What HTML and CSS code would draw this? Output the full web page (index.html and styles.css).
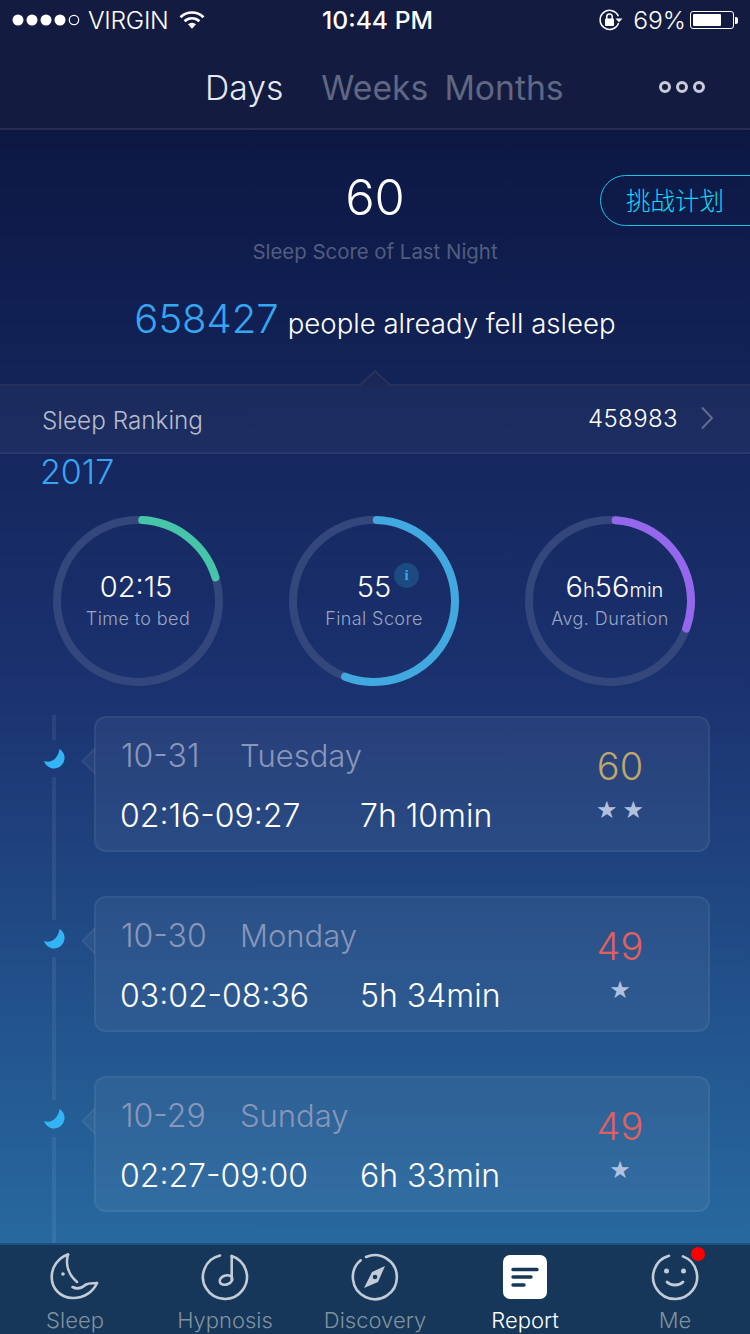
FILE: index.html
```html
<!DOCTYPE html>
<html lang="en">
<head>
<meta charset="utf-8">
<title>Sleep report</title>
<link rel="stylesheet" href="styles.css">
</head>
<body>
<div class="page">
  <header class="top">
    <div class="status">
      <div class="status-left">
        <svg class="signal" width="68" height="14" viewBox="0 0 68 14"><g fill="#fff"><circle cx="6" cy="7" r="5.5"/><circle cx="20" cy="7" r="5.5"/><circle cx="34" cy="7" r="5.5"/><circle cx="48" cy="7" r="5.5"/></g><circle cx="62" cy="7" r="4.7" fill="none" stroke="#fff" stroke-width="1.2"/></svg>
        <span class="carrier">VIRGIN</span>
        <svg class="wifi" width="26" height="20" viewBox="0 0 26 20"><g fill="none" stroke="#fff" stroke-width="2.6"><path d="M1.5 7.2a16.5 16.5 0 0 1 23 0"/><path d="M5.6 11.2a10.7 10.7 0 0 1 14.8 0"/></g><path d="M9 14.3a5.8 5.8 0 0 1 8 0l-4 4.4z" fill="#fff"/></svg>
      </div>
      <div class="clock">10:44 PM</div>
      <div class="status-right">
        <svg class="rotlock" width="24" height="22" viewBox="0 0 24 22"><path d="M19.4 7.2A9.5 9.5 0 1 0 19.6 14" fill="none" stroke="#fff" stroke-width="1.5"/><path d="M16.5 9.5h7L20 13.2z" fill="#fff"/><rect x="6" y="9.5" width="9" height="7.5" rx="1" fill="#fff"/><path d="M7.8 10V7.6a2.7 2.7 0 0 1 5.4 0V10" fill="none" stroke="#fff" stroke-width="1.5"/></svg>
        <span class="pct">69%</span>
        <span class="battery"><span class="battery-fill"></span></span><span class="battery-cap"></span>
      </div>
    </div>
    <nav class="tabs">
      <span class="tab tab-on">Days</span>
      <span class="tab tab-weeks">Weeks</span>
      <span class="tab tab-months">Months</span>
      <span class="more"><i></i><i></i><i></i></span>
    </nav>
  </header>

  <main class="main">
    <section class="hero">
      <div class="hero-row">
        <span></span>
        <div class="score">60</div>
        <a class="plan">挑战计划</a>
      </div>
      <div class="score-label">Sleep Score of Last Night</div>
      <div class="asleep"><span class="asleep-num">658427</span> people already fell asleep</div>
    </section>

    <section class="rank">
      <svg class="rank-notch" width="32" height="16" viewBox="0 0 32 16"><path d="M1 16 16 1l15 15z" fill="#1a2757"/><path d="M1 15 16 1l15 14" fill="none" stroke="#27325f" stroke-width="2"/></svg>
      <span class="rank-title">Sleep Ranking</span>
      <span class="rank-num">458983</span>
      <svg class="chev" width="14" height="24" viewBox="0 0 14 24"><path d="M2 1.5 12 12 2 22.5" fill="none" stroke="#5f6c8f" stroke-width="2"/></svg>
    </section>

    <div class="year">2017</div>

    <section class="rings">
      <div class="ring">
        <svg width="170" height="170" viewBox="0 0 170 170"><circle class="track" cx="85" cy="85" r="81"/><circle class="arc arc-teal" cx="85" cy="85" r="81" pathLength="360" stroke-dasharray="70 360" transform="rotate(-87 85 85)"/></svg>
        <div class="ring-text"><div class="ring-val ring-val-time">02:15</div><div class="ring-lab">Time to bed</div></div>
      </div>
      <div class="ring">
        <svg width="170" height="170" viewBox="0 0 170 170"><circle class="track" cx="85" cy="85" r="81"/><circle class="arc arc-blue" cx="85" cy="85" r="81" pathLength="360" stroke-dasharray="199 360" transform="rotate(-88 85 85)"/></svg>
        <div class="ring-text"><div class="ring-val">55</div><div class="ring-lab">Final Score</div></div>
        <span class="info">i</span>
      </div>
      <div class="ring">
        <svg width="170" height="170" viewBox="0 0 170 170"><circle class="track" cx="85" cy="85" r="81"/><circle class="arc arc-purple" cx="85" cy="85" r="81" pathLength="360" stroke-dasharray="106 360" transform="rotate(-86 85 85)"/></svg>
        <div class="ring-text"><div class="ring-val ring-val-dur">6<small>h</small>56<small>min</small></div><div class="ring-lab">Avg. Duration</div></div>
      </div>
    </section>

    <section class="timeline">
      <article class="row">
        <div class="rail"><i class="seg seg-top"></i><svg class="moon" width="21" height="22" viewBox="0 0 21 22"><path d="M15.500 0A10.500 10.500 0 1 1 0 12C7 15 14.500 9 15.500 0z" fill="#33b5f5"/></svg><i class="seg seg-bot"></i></div>
        <div class="card">
          <div class="card-main">
            <span class="date">10-31</span><span class="day">Tuesday</span>
            <span class="range">02:16-09:27</span><span class="dur">7h 10min</span>
          </div>
          <div class="card-score"><div class="pts pts-gold">60</div><div class="stars">★★</div></div>
        </div>
      </article>
      <article class="row">
        <div class="rail"><i class="seg seg-top"></i><svg class="moon" width="21" height="22" viewBox="0 0 21 22"><path d="M15.500 0A10.500 10.500 0 1 1 0 12C7 15 14.500 9 15.500 0z" fill="#33b5f5"/></svg><i class="seg seg-bot"></i></div>
        <div class="card">
          <div class="card-main">
            <span class="date">10-30</span><span class="day">Monday</span>
            <span class="range">03:02-08:36</span><span class="dur">5h 34min</span>
          </div>
          <div class="card-score"><div class="pts pts-red">49</div><div class="stars">★</div></div>
        </div>
      </article>
      <article class="row">
        <div class="rail"><i class="seg seg-top"></i><svg class="moon" width="21" height="22" viewBox="0 0 21 22"><path d="M15.500 0A10.500 10.500 0 1 1 0 12C7 15 14.500 9 15.500 0z" fill="#33b5f5"/></svg><i class="seg seg-bot"></i></div>
        <div class="card">
          <div class="card-main">
            <span class="date">10-29</span><span class="day">Sunday</span>
            <span class="range">02:27-09:00</span><span class="dur">6h 33min</span>
          </div>
          <div class="card-score"><div class="pts pts-red">49</div><div class="stars">★</div></div>
        </div>
      </article>
    </section>
  </main>

  <footer class="bar">
    <div class="item">
      <svg width="50" height="48" viewBox="0 0 50 48"><g fill="none" stroke="#c3ccd6" stroke-width="2.600" stroke-linecap="round" stroke-linejoin="round"><path d="M18 1.500C8 5 1.700 14 1.700 24 1.700 36 11 45 23 45c11 0 20-6 24-15"/><path d="M18 1.500C15 12 19 22 27 29"/><path d="M22.500 34c5.500 3 9.500 1 13.500-2.500 3-1.500 7-1 11-1.500"/></g><circle cx="13" cy="21" r="1.800" fill="#c3ccd6"/></svg>
      <span>Sleep</span>
    </div>
    <div class="item">
      <svg width="48" height="48" viewBox="0 0 48 48"><g fill="none" stroke="#c3ccd6" stroke-width="2.600" stroke-linecap="round"><path d="M19 2.500a22 22 0 1 0 11.700.5"/><path d="M30.700 3v23.500"/><ellipse cx="25" cy="27" rx="6.500" ry="4.500" transform="rotate(-20 25 27)"/></g></svg>
      <span>Hypnosis</span>
    </div>
    <div class="item">
      <svg width="48" height="48" viewBox="0 0 48 48"><path d="M15 4A22 22 0 1 1 9.700 7.300" fill="none" stroke="#c3ccd6" stroke-width="2.600" stroke-linecap="round"/><path d="M34 13 27 29 13 35l8-16z" fill="#c3ccd6"/><circle cx="24" cy="24" r="2.300" fill="#16375a"/></svg>
      <span>Discovery</span>
    </div>
    <div class="item item-on">
      <svg width="46" height="46" viewBox="0 0 46 46"><rect x="1" y="1" width="44" height="44" rx="7" fill="#fff"/><g stroke="#16375a" stroke-width="3.400" stroke-linecap="round"><path d="M11 15.500h24"/><path d="M11 23h18"/><path d="M11 31h11"/></g></svg>
      <span>Report</span>
    </div>
    <div class="item">
      <svg width="48" height="48" viewBox="0 0 48 48"><path d="M18 2.800a22 22 0 1 0 14 .6" fill="none" stroke="#c3ccd6" stroke-width="2.600" stroke-linecap="round"/><circle cx="15.500" cy="18" r="2.500" fill="#c3ccd6"/><circle cx="32.500" cy="18" r="2.500" fill="#c3ccd6"/><path d="M16 29c4 4 12 4 16 0" fill="none" stroke="#c3ccd6" stroke-width="2.800" stroke-linecap="round"/></svg>
      <span>Me</span>
      <i class="dot"></i>
    </div>
  </footer>
</div>
</body>
</html>
```

FILE: styles.css
```css
* { box-sizing: border-box; }
html, body { margin: 0; padding: 0; }
body { font-family: Inter, "Noto Sans CJK SC", sans-serif; color: #fff; background: #0d1845; }

.page { width: 750px; height: 1334px; overflow: hidden; display: flex; flex-direction: column; }

.top { flex: none; height: 130px; background: #131c40; border-bottom: 2px solid #252d50; }
.status { height: 40px; display: grid; grid-template-columns: 1fr auto 1fr; align-items: center; padding: 0 12px; }
.status-left { display: flex; align-items: center; }
.carrier { font-size: 24.700px; font-weight: 300; margin-left: 8px; letter-spacing: -.3px; }
.wifi { margin-left: 10px; }
.clock { font-size: 24.700px; font-weight: 500; margin-left: 5px; }
.status-right { display: flex; align-items: center; justify-content: flex-end; }
.pct { font-size: 24.700px; font-weight: 300; margin-left: 10px; }
.battery { width: 44px; height: 18px; margin-left: 4px; border: 1.500px solid #fff; border-radius: 3px; padding: 2px; display: block; }
.battery-fill { display: block; width: 28px; height: 100%; background: #fff; border-radius: 1px; }
.battery-cap { width: 3px; height: 7px; margin-left: 1px; background: #fff; border-radius: 0 2px 2px 0; }

.tabs { height: 88px; display: flex; align-items: center; padding: 7px 45px 0 205px; font-size: 33.700px; }
.tab { color: #5f6783; font-weight: 400; }
.tab-on { color: #e6e9f2; font-weight: 300; }
.tab-weeks { margin-left: 38px; }
.tab-months { margin-left: 16px; }
.more { margin-left: auto; display: flex; gap: 5px; margin-top: -2px; }
.more i { width: 12px; height: 12px; border: 3px solid #c9ccd8; border-radius: 50%; }

.main { flex: 1; min-height: 0; display: flex; flex-direction: column; background: linear-gradient(180deg, #0c1743 0%, #1b3270 50%, #27699f 100%); }

.hero { flex: none; height: 254px; display: flex; flex-direction: column; align-items: center; padding-top: 45px; }
.hero-row { width: 100%; display: grid; grid-template-columns: 1fr auto 1fr; }
.score { font-size: 49px; font-weight: 300; line-height: 46px; }
.plan { justify-self: end; width: 151px; height: 51px; margin-right: -1px; border: 1.500px solid #17c7e6; border-radius: 26px 0 0 26px; padding-left: 25px; color: #0edcf8; font-size: 24.500px; line-height: 48px; font-family: "Noto Sans CJK SC", sans-serif; font-weight: 300; }
.score-label { margin-top: 14px; font-size: 20.400px; color: #525c80; line-height: 24px; }
.asleep { margin-top: 31px; font-size: 27.600px; font-weight: 300; display: flex; align-items: baseline; gap: 9px; line-height: 48px; }
.asleep-num { font-size: 40px; color: #36a5f2; }

.rank { position: relative; flex: none; height: 70px; display: flex; align-items: center; padding: 2px 36px 0 42px; background: rgba(255,255,255,.035); border-top: 2px solid #25305f; border-bottom: 2px solid #2a3a6f; }
.rank-notch { position: absolute; left: 359px; top: -16px; }
.rank-title { font-size: 24.300px; font-weight: 300; color: #b6bccd; flex: 1; }
.rank-num { font-size: 24px; font-weight: 300; letter-spacing: .4px; margin-top: -4px; }
.chev { margin-left: 22px; margin-top: -4px; }

.year { flex: none; height: 38px; padding-left: 40px; font-size: 34px; font-weight: 300; line-height: 36px; color: #36a5f2; }

.rings { flex: none; display: flex; justify-content: space-between; padding: 24px 55px 0 53px; }
.ring { position: relative; width: 170px; height: 170px; }
.ring svg { display: block; }
.track { fill: none; stroke: #34477c; stroke-width: 8; }
.arc { fill: none; stroke-width: 8; stroke-linecap: round; }
.arc-teal { stroke: #46c5ab; }
.arc-blue { stroke: #42a8e0; }
.arc-purple { stroke: #9467ec; }
.ring-text { position: absolute; inset: 0; display: flex; flex-direction: column; align-items: center; padding-top: 54px; }
.ring-val { font-size: 29px; font-weight: 300; line-height: 34px; }
.ring-val-time { margin-right: 4px; }
.ring-val-dur { margin-left: 9px; }
.ring-val small { font-size: 20px; line-height: 0; }
.ring-lab { font-size: 18px; font-weight: 300; color: #9aa5c4; line-height: 24px; margin-top: 3px; letter-spacing: .4px; }
.info { position: absolute; left: 105px; top: 47px; width: 25px; height: 25px; border-radius: 50%; background: #1d4a80; color: #36a5f2; font: 700 15px/25px "Liberation Serif", serif; text-align: center; }

.timeline { flex: none; padding: 30px 40px 0 52px; display: flex; flex-direction: column; gap: 44px; }
.row { display: flex; height: 136px; }
.rail { flex: none; width: 42px; position: relative; }
.seg { position: absolute; left: 0; width: 4px; background: rgba(255,255,255,.07); }
.seg-top { top: -1px; height: 25px; }
.seg-bot { top: 61px; height: 118px; }
.moon { position: absolute; left: -8px; top: 33px; }
.card { position: relative; flex: 1; display: flex; justify-content: space-between; padding: 7px 63px 0 25px; background: rgba(255,255,255,.05); border: 2px solid rgba(255,255,255,.05); border-radius: 12px; }
.card::before { content: ""; position: absolute; left: -11px; top: 33px; width: 18px; height: 18px; background: rgba(255,255,255,.05); border-left: 2px solid rgba(255,255,255,.05); border-bottom: 2px solid rgba(255,255,255,.05); transform: rotate(45deg); clip-path: polygon(0 0, 0 100%, 100% 100%); }
.card-main { display: grid; grid-template-columns: 120px 120px auto; grid-auto-rows: 60px; align-items: center; font-size: 32px; font-weight: 300; }
.date, .day { color: #8996b9; }
.day { grid-column: 2 / 4; font-size: 31px; margin-left: -1px; }
.range { grid-column: 1 / 3; color: #fff; margin-left: -1px; }
.dur { color: #fff; margin-left: -1px; }
.card-score { width: 50px; display: flex; flex-direction: column; align-items: center; padding-top: 17px; }
.pts { font-size: 38px; font-weight: 300; line-height: 48px; }
.pts-gold { color: #bfa76c; }
.pts-red { color: #e0605f; }
.stars { font-size: 24px; line-height: 28px; color: #b3c1e0; margin-top: 6px; padding-left: 5px; letter-spacing: 5px; font-family: "DejaVu Sans", sans-serif; white-space: nowrap; }

.bar { position: relative; flex: none; height: 91px; display: grid; grid-template-columns: repeat(5, 150px); background: #16375a; border-top: 2px solid #1d4f84; }
.item { position: relative; display: flex; flex-direction: column; align-items: center; padding-top: 8px; font-size: 22px; font-weight: 300; color: #80929f; }
.item svg { display: block; height: 48px; }
.item span { margin-top: 6px; line-height: 26px; }
.item-on { color: #fff; }
.dot { position: absolute; left: 91px; top: 2px; width: 14px; height: 14px; border-radius: 50%; background: #fe0000; }
```
